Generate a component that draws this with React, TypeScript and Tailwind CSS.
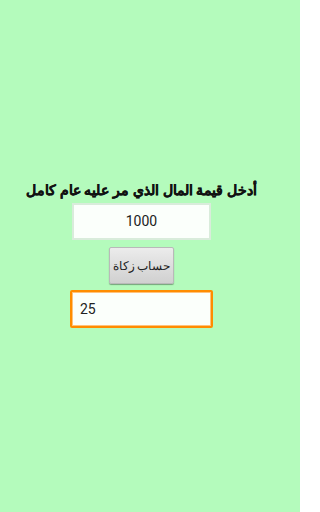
export default function App() {
  return (
    <div className="h-[512px] w-[300px] bg-[#b4fbbc] flex flex-col items-center pt-[177px] pr-[17px] font-['Noto_Sans',sans-serif]">
      {/* title */}
      <h1 dir="rtl" className="whitespace-nowrap text-[14.4px] font-bold leading-[25px] text-[#111] [-webkit-text-stroke:0.3px_#111]">
        أدخل قيمة المال الذي مر عليه عام كامل
      </h1>

      {/* amount input */}
      <div className="mt-px w-[139px] h-[37px] border-2 border-[#d9ecdb] bg-[#fbfffb] flex items-center justify-center">
        <span className="text-[14px] text-[#222] font-['Roboto',sans-serif]">1000</span>
      </div>

      {/* button */}
      <button
        dir="rtl"
        className="mt-[7px] w-[65px] h-[37px] px-0 rounded-[2px] border border-[#b9b9b9] bg-gradient-to-b from-[#ececec] to-[#d0d0d0] shadow-[0_1px_1px_rgba(0,0,0,0.35)] text-[11.5px] text-[#222] whitespace-nowrap"
      >
        حساب زكاة
      </button>

      {/* result */}
      <div className="mt-[6px] w-[143px] h-[38px] rounded-[2px] border-2 border-[#ff8c00] bg-[#fbfffb] flex items-center px-[8px] shadow-[inset_0_0_0_1px_#ffc27a]">
        <span className="text-[14px] text-[#222] font-['Roboto',sans-serif]">25</span>
      </div>
    </div>
  );
}
